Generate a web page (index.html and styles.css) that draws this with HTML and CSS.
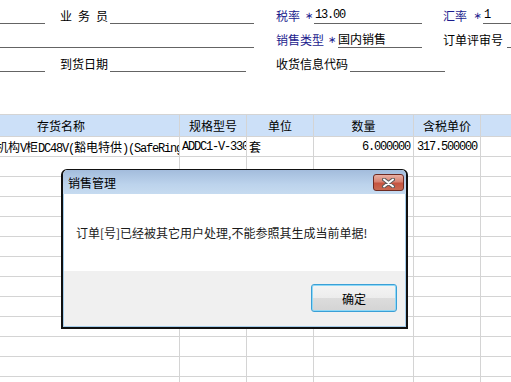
FILE: index.html
```html
<!DOCTYPE html>
<html lang="zh-CN">
<head>
    <meta charset="UTF-8">
    <meta name="viewport" content="width=device-width, initial-scale=1.0">
    <title>销售订单</title>
    <link rel="stylesheet" href="styles.css">
</head>
<body>

<!-- 表头信息 -->
<div class="form">
    <div class="frow">
        <span class="fline w45"></span>
        <span class="lab ml15 w50 spread">业务员</span>
        <span class="fline w144"></span>
        <span class="lab req ml22 w28">税率</span>
        <span class="star w10">∗</span>
        <span class="fline w108"><span class="num">13.00</span></span>
        <span class="lab req ml21 w30">汇率</span>
        <span class="star w9">∗</span>
        <span class="fline grow-line"><span class="num">1</span></span>
    </div>
    <div class="frow">
        <span class="fline w254"></span>
        <span class="lab req ml22 w50">销售类型</span>
        <span class="star w12">∗</span>
        <span class="fline w84"><span class="txt">国内销售</span></span>
        <span class="lab ml21 w63">订单评审号</span>
        <span class="fline grow-line"></span>
    </div>
    <div class="frow">
        <span class="fline w45"></span>
        <span class="lab ml15 w50">到货日期</span>
        <span class="fline w136"></span>
        <span class="lab ml30 w74">收货信息代码</span>
        <span class="fline w95"></span>
    </div>
</div>

<!-- 表体 -->
<div class="grid">
    <div class="grow ghead">
        <div class="cell c1 name-head">存货名称</div>
        <div class="cell c2">规格型号</div>
        <div class="cell c3">单位</div>
        <div class="cell c4">数量</div>
        <div class="cell c5">含税单价</div>
        <div class="cell c6"></div>
    </div>
    <div class="grow">
        <div class="cell c1 left name-cell"><span class="name-text">机构<span class="hw">V</span>柜<span class="hw">DC48V(</span>豁电特供<span class="hw">)(SafeRing)</span></span></div>
        <div class="cell c2 left"><span class="hw">ADDC1-V-330</span></div>
        <div class="cell c3 left">套</div>
        <div class="cell c4 right"><span class="hw">6.000000</span></div>
        <div class="cell c5 right"><span class="hw">317.500000</span></div>
        <div class="cell c6"></div>
    </div>
    <div class="grow"><div class="cell c1"></div><div class="cell c2"></div><div class="cell c3"></div><div class="cell c4"></div><div class="cell c5"></div><div class="cell c6"></div></div>
    <div class="grow"><div class="cell c1"></div><div class="cell c2"></div><div class="cell c3"></div><div class="cell c4"></div><div class="cell c5"></div><div class="cell c6"></div></div>
    <div class="grow"><div class="cell c1"></div><div class="cell c2"></div><div class="cell c3"></div><div class="cell c4"></div><div class="cell c5"></div><div class="cell c6"></div></div>
    <div class="grow"><div class="cell c1"></div><div class="cell c2"></div><div class="cell c3"></div><div class="cell c4"></div><div class="cell c5"></div><div class="cell c6"></div></div>
    <div class="grow"><div class="cell c1"></div><div class="cell c2"></div><div class="cell c3"></div><div class="cell c4"></div><div class="cell c5"></div><div class="cell c6"></div></div>
    <div class="grow"><div class="cell c1"></div><div class="cell c2"></div><div class="cell c3"></div><div class="cell c4"></div><div class="cell c5"></div><div class="cell c6"></div></div>
    <div class="grow"><div class="cell c1"></div><div class="cell c2"></div><div class="cell c3"></div><div class="cell c4"></div><div class="cell c5"></div><div class="cell c6"></div></div>
    <div class="grow"><div class="cell c1"></div><div class="cell c2"></div><div class="cell c3"></div><div class="cell c4"></div><div class="cell c5"></div><div class="cell c6"></div></div>
    <div class="grow"><div class="cell c1"></div><div class="cell c2"></div><div class="cell c3"></div><div class="cell c4"></div><div class="cell c5"></div><div class="cell c6"></div></div>
    <div class="grow"><div class="cell c1"></div><div class="cell c2"></div><div class="cell c3"></div><div class="cell c4"></div><div class="cell c5"></div><div class="cell c6"></div></div>
    <div class="grow"><div class="cell c1"></div><div class="cell c2"></div><div class="cell c3"></div><div class="cell c4"></div><div class="cell c5"></div><div class="cell c6"></div></div>
    <div class="grow"><div class="cell c1"></div><div class="cell c2"></div><div class="cell c3"></div><div class="cell c4"></div><div class="cell c5"></div><div class="cell c6"></div></div>
</div>

<!-- 提示对话框 -->
<div class="dlg">
    <div class="dlg-title">
        <span>销售管理</span>
        <button class="dlg-close" type="button">
            <svg width="13" height="10" viewBox="0 0 13 10">
                <path d="M2 1.5 L11 8.5 M11 1.5 L2 8.5" stroke="#5a5a5a" stroke-width="4" stroke-linecap="round"/>
                <path d="M2 1.5 L11 8.5 M11 1.5 L2 8.5" stroke="#ffffff" stroke-width="2" stroke-linecap="round"/>
            </svg>
        </button>
    </div>
    <div class="dlg-inner">
        <div class="dlg-body">订单[号]已经被其它用户处理,不能参照其生成当前单据!</div>
        <div class="dlg-foot">
            <button class="ok-button" type="button">确定</button>
        </div>
    </div>
</div>

</body>
</html>
```

FILE: styles.css
```css
body {
    margin: 0;
    background-color: white;
    font-family: "Noto Sans CJK SC", sans-serif;
    font-size: 12px;
    color: black;
    width: 511px;
    height: 382px;
    overflow: hidden;
    position: relative;
}
.frow {
    display: flex;
    height: 24px;
}
.fline {
    flex: none;
    box-sizing: border-box;
    height: 24px;
    border-bottom: 1px solid #646464;
    display: flex;
    align-items: flex-end;
    white-space: nowrap;
    overflow: hidden;
}
.grow-line {
    flex: 1;
    margin-left: 1px;
}
.lab {
    flex: none;
    display: flex;
    align-items: flex-end;
    padding-bottom: 1px;
    line-height: 14px;
    white-space: nowrap;
    box-sizing: border-box;
}
.spread {
    letter-spacing: 6px;
}
.req {
    color: #1c1c8e;
}
.star {
    flex: none;
    display: flex;
    align-items: center;
    justify-content: center;
    padding-top: 6px;
    color: #1c1c8e;
    font-family: "DejaVu Sans", sans-serif;
    font-size: 10px;
}
.num {
    font-family: "Liberation Mono", monospace;
    letter-spacing: -1.2px;
    line-height: 14px;
    padding-bottom: 1px;
    padding-left: 1px;
}
.txt {
    line-height: 14px;
    padding-bottom: 1px;
}
.w9 { width: 9px; }
.w10 { width: 10px; }
.w12 { width: 12px; }
.w28 { width: 28px; }
.w30 { width: 30px; }
.w45 { width: 45px; }
.w50 { width: 50px; }
.w63 { width: 63px; }
.w74 { width: 74px; }
.w84 { width: 84px; }
.w95 { width: 95px; }
.w108 { width: 108px; }
.w136 { width: 136px; }
.w144 { width: 144px; }
.w254 { width: 254px; }
.ml15 { margin-left: 15px; }
.ml21 { margin-left: 21px; }
.ml22 { margin-left: 22px; }
.ml30 { margin-left: 30px; }

/* 表体 */
.grid {
    margin-top: 42px;
    border-top: 1px solid #d4d4d4;
}
.grow {
    display: flex;
    height: 20px;
    box-sizing: border-box;
    border-bottom: 1px solid #d4d4d4;
}
.ghead {
    height: 22px;
    background-color: #cce0f8;
}
.cell {
    flex: none;
    box-sizing: border-box;
    border-right: 1px solid #d4d4d4;
    display: flex;
    align-items: center;
    justify-content: center;
    white-space: nowrap;
    overflow: hidden;
}
.c1 { width: 180px; }
.c2 { width: 67px; }
.c3 { width: 67px; }
.c4 { width: 100px; }
.c5 { width: 67px; }
.c6 { flex: 1; border-right: none; }
.name-head {
    padding-right: 57px;
}
.left {
    justify-content: flex-start;
    padding-left: 2px;
}
.right {
    justify-content: flex-end;
    padding-right: 3px;
}
.hw {
    font-family: "Liberation Mono", monospace;
    letter-spacing: -1.2px;
}
.name-cell {
    padding-left: 0;
}
.name-text {
    margin-left: -4px;
}

/* 对话框 */
.dlg {
    position: absolute;
    left: 61px;
    top: 169px;
    width: 347px;
    height: 160px;
    box-sizing: border-box;
    border: 2px solid #111;
    border-top-width: 1px;
    border-radius: 6px 6px 0 0;
    display: flex;
    flex-direction: column;
    background-color: #f0f0f0;
}
.dlg-title {
    height: 24px;
    flex: none;
    background: linear-gradient(#a3bcdc, #bcd3ec 60%, #c6dbf0);
    border-radius: 5px 5px 0 0;
    display: flex;
    align-items: center;
    justify-content: space-between;
    padding-left: 5px;
    padding-right: 2px;
    font-size: 12px;
}
.dlg-close {
    width: 31px;
    height: 17px;
    margin-top: 1px;
    padding: 0;
    border: 1px solid #6d2a22;
    border-radius: 3px;
    background: linear-gradient(#e9b0a4, #d78271 45%, #c65440 55%, #c86a52);
    display: flex;
    align-items: center;
    justify-content: center;
}
.dlg-inner {
    flex: 1;
    display: flex;
    flex-direction: column;
    border: 1px solid #a6cdea;
    border-top: none;
}
.dlg-body {
    height: 77px;
    background-color: white;
    display: flex;
    align-items: center;
    padding-left: 12px;
    color: #1a1a1a;
}
.dlg-foot {
    flex: 1;
    background-color: #f0f0f0;
    display: flex;
    justify-content: flex-end;
    align-items: flex-start;
    padding-top: 13px;
    padding-right: 8px;
}
.ok-button {
    width: 86px;
    height: 28px;
    border: 1px solid #3a9fd6;
    border-radius: 3px;
    box-shadow: inset 0 0 0 1px #8ed8f6;
    background: linear-gradient(#f4f4f4, #ececec 50%, #dcdcdc 51%, #d4d4d4);
    font-family: "Noto Sans CJK SC", sans-serif;
    font-size: 12px;
    color: black;
    padding: 0;
}
```
